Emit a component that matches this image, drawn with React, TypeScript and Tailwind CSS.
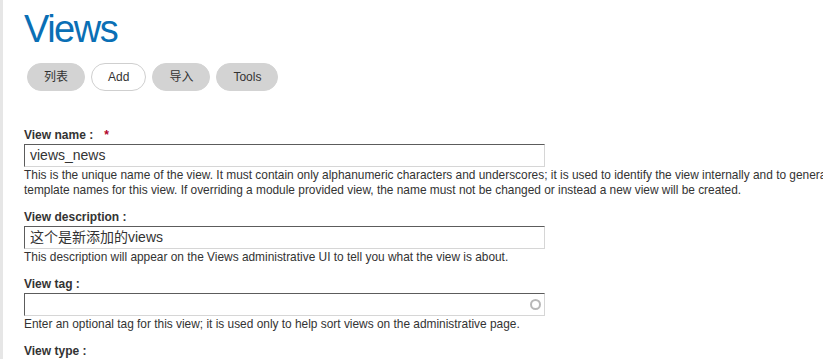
import React from 'react'

const font = { fontFamily: '"Liberation Sans", Arial, "Noto Sans CJK SC", sans-serif' }

function Tab({ label, active }: { label: string; active?: boolean }) {
  return (
    <a
      href="#"
      className={
        active
          ? 'flex items-center h-[28px] px-[16px] rounded-full bg-white border border-[#cfcfcf] text-[12px] text-[#333]'
          : 'flex items-center h-[28px] px-[16px] rounded-full bg-[#d3d3d3] border border-[#d3d3d3] text-[12px] text-[#333]'
      }
    >
      {label}
    </a>
  )
}

function Field({
  label,
  required,
  value,
  throbber,
  children,
}: {
  label: string
  required?: boolean
  value?: string
  throbber?: boolean
  children?: React.ReactNode
}) {
  return (
    <div className="mb-[11px]">
      <label className="block text-[12px] leading-[16px] font-bold text-[#333]">
        {label} :{required && <span className="ml-[11px] text-[#b0002a]">*</span>}
      </label>
      <div className="relative w-[521px] h-[23px] mt-[1px] border border-t-[#5c5c5c] border-l-[#5c5c5c] border-r-[#d6d6d6] border-b-[#d6d6d6] bg-white">
        <div className="pl-[5px] text-[14px] leading-[21px] text-[#333]">{value}</div>
        {throbber && (
          <svg className="absolute right-[2px] top-[4px]" width="13" height="13" viewBox="0 0 13 13">
            <circle cx="6.5" cy="6.5" r="4.5" fill="none" stroke="#b8b8b8" strokeWidth="2" />
          </svg>
        )}
      </div>
      {children && (
        <div className="mt-[1px] text-[11.9px] leading-[15px] text-[#333]">{children}</div>
      )}
    </div>
  )
}

export default function App() {
  return (
    <div className="flex w-[823px] h-[359px] overflow-hidden bg-white" style={font}>
      <div className="w-[3px] shrink-0 bg-[#e6e6e6]" />
      <div className="w-[941px] shrink-0 pl-[21px]">
        <h1 className="pt-[10px] text-[38px] leading-[38px] tracking-[-1.5px] text-[#0a6fb5]">Views</h1>
        <div className="flex gap-[6px] mt-[15px] ml-[3px]">
          <Tab label="列表" />
          <Tab label="Add" active />
          <Tab label="导入" />
          <Tab label="Tools" />
        </div>
        <form className="mt-[36px]">
          <Field label="View name" required value="views_news">
            This is the unique name of the view. It must contain only alphanumeric characters and underscores; it is
            used to identify the view internally and to generate unique theming template names for this view. If
            overriding a module provided view, the name must not be changed or instead a new view will be created.
          </Field>
          <Field label="View description" value="这个是新添加的views">
            This description will appear on the Views administrative UI to tell you what the view is about.
          </Field>
          <Field label="View tag" throbber>
            Enter an optional tag for this view; it is used only to help sort views on the administrative page.
          </Field>
          <label className="block text-[12px] leading-[16px] font-bold text-[#333]">View type :</label>
        </form>
      </div>
    </div>
  )
}
